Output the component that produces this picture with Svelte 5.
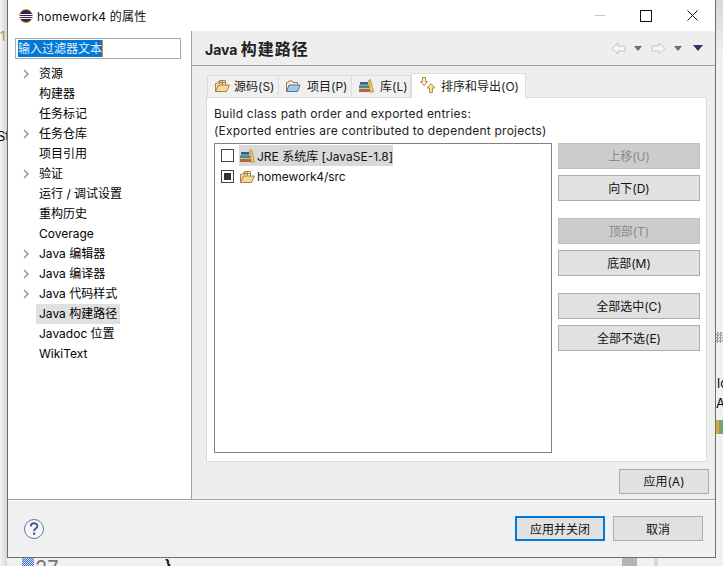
<script lang="ts">
    const tree = [
        { label: '资源', arrow: true },
        { label: '构建器' },
        { label: '任务标记' },
        { label: '任务仓库', arrow: true },
        { label: '项目引用' },
        { label: '验证', arrow: true },
        { label: '运行 / 调试设置' },
        { label: '重构历史' },
        { label: 'Coverage' },
        { label: 'Java 编辑器', arrow: true },
        { label: 'Java 编译器', arrow: true },
        { label: 'Java 代码样式', arrow: true },
        { label: 'Java 构建路径', selected: true },
        { label: 'Javadoc 位置' },
        { label: 'WikiText' }
    ];

    const groups = [
        [
            { label: '上移(U)', disabled: true },
            { label: '向下(D)' }
        ],
        [
            { label: '顶部(T)', disabled: true },
            { label: '底部(M)' }
        ],
        [{ label: '全部选中(C)' }, { label: '全部不选(E)' }]
    ];
</script>

{#snippet folderIcon()}
    <svg class="icon" width="16" height="16" viewBox="0 0 16 16">
        <path d="M1.5 13.5V5.5h1.5l1-1.5h3l.5 1.5" fill="#f3dfa8" stroke="#a8814a" />
        <path d="M5.5 6V2.5h6V7M8.5 2.5V7M5.5 4.5h6" fill="none" stroke="#a8814a" />
        <path d="M1.5 13.5l3-6.5h11l-3 6.5z" fill="#f5d99a" stroke="#a8814a" stroke-linejoin="round" />
    </svg>
{/snippet}

{#snippet projectIcon()}
    <svg class="icon" width="16" height="16" viewBox="0 0 16 16">
        <path d="M1.5 13.5V4.5h1.5l1-1.5h3l1 1.5h4.500v2" fill="#fbf1cf" stroke="#8f7a4e" />
        <path d="M1.5 13.500l2.500-6.500h11l-2.500 6.500z" fill="#a6c8ec" stroke="#4f7299" stroke-linejoin="round" />
    </svg>
{/snippet}

{#snippet libIcon()}
    <svg class="icon" width="16" height="16" viewBox="0 0 16 16">
        <path d="M10.500 2.500l2-1 3 12.500h-3.500z" fill="#eec765" stroke="#b88a30" stroke-width=".8" />
        <rect x="1" y="10.500" width="11" height="3.500" fill="#b5673c" />
        <rect x="1" y="7" width="10" height="3.500" fill="#3f8f7d" />
        <rect x="2" y="4" width="8" height="3" fill="#3a5f8c" />
        <path d="M1 10.500h11M1 7h10" stroke="#e8e8d8" stroke-width=".6" />
    </svg>
{/snippet}

{#snippet sortIcon()}
    <svg class="icon" width="18" height="18" viewBox="0 0 18 18">
        <path d="M3.500 1.500h3v4h2l-3.500 4-3.500-4h2z" fill="#fbf3dc" stroke="#a8853d" />
        <path d="M10.500 16.500v-4.500h-2.500l4-4.500 4 4.500h-2.500v4.500z" fill="#f7df9e" stroke="#bb9238" />
    </svg>
{/snippet}

<div class="desktop">
    <span class="shade-left"></span>
    <span class="behind behind-one">1</span>
    <span class="behind behind-st">St</span>
    <span class="behind-strip"></span>
    <span class="behind-tick"></span>
    <span class="behind behind-lo">lo</span>
    <span class="behind behind-a">A</span>
    <span class="behind-edge"></span>
    <span class="behind-hatch"></span>
    <span class="behind behind-num">27</span>
    <span class="behind behind-brace">}</span>
    <span class="behind-block"></span>
    <span class="behind-lilac"></span>

    <div class="window">
        <header class="titlebar">
            <svg class="app-icon" width="16" height="16" viewBox="0 0 16 16">
                <circle cx="8" cy="8" r="6.500" fill="#2c2255" stroke="#f7941e" stroke-width="1" />
                <path d="M1.500 6.500h13M1 8.500h14M1.500 10.500h13" stroke="#f4f2f8" stroke-width="1" />
            </svg>
            <span class="title">homework4 的属性</span>
            <div class="win-buttons">
                <span class="win-btn"><span class="min-mark"></span></span>
                <span class="win-btn"><span class="max-mark"></span></span>
                <span class="win-btn">
                    <svg width="11" height="11" viewBox="0 0 11 11">
                        <path d="M.5.500l10 10M10.500.500l-10 10" stroke="#111" stroke-width="1" fill="none" />
                    </svg>
                </span>
            </div>
        </header>

        <div class="main">
            <aside class="side">
                <div class="filter"><span class="filter-sel">输入过滤器文本</span></div>
                <ul class="tree">
                    {#each tree as item}
                        <li class="tree-row">
                            <span class="twisty">
                                {#if item.arrow}
                                    <svg width="7" height="10" viewBox="0 0 7 10">
                                        <path d="M1 1l4 4-4 4" fill="none" stroke="#9a9a9a" stroke-width="1.700" />
                                    </svg>
                                {/if}
                            </span>
                            <span class="tree-label" class:tree-selected={item.selected}>{item.label}</span>
                        </li>
                    {/each}
                </ul>
            </aside>

            <section class="content">
                <div class="page-head">
                    <h1>Java <span class="h1-cjk">构建路径</span></h1>
                    <div class="nav-tools">
                        <svg width="15" height="13" viewBox="0 0 15 13">
                            <path d="M14 4v5H7v3L1 6.500 7 1v3z" fill="#f6f6f6" stroke="#c4c4c4" />
                        </svg>
                        <span class="caret"></span>
                        <svg class="nav-next" width="15" height="13" viewBox="0 0 15 13">
                            <path d="M1 4v5h7v3l6-5.500L8 1v3z" fill="#f6f6f6" stroke="#c4c4c4" />
                        </svg>
                        <span class="caret"></span>
                        <span class="caret caret-menu"></span>
                    </div>
                </div>

                <div class="page-body">
                    <div class="tabs">
                        <div class="tab tab-src">{@render folderIcon()}<span>源码(S)</span></div>
                        <div class="tab tab-prj">{@render projectIcon()}<span>项目(P)</span></div>
                        <div class="tab tab-lib">{@render libIcon()}<span>库(L)</span></div>
                        <div class="tab tab-active">{@render sortIcon()}<span>排序和导出(O)</span></div>
                    </div>

                    <div class="tab-panel">
                        <p class="hint">Build class path order and exported entries:<br />(Exported entries are contributed to dependent projects)</p>
                        <div class="order">
                            <div class="list">
                                <div class="list-row">
                                    <span class="check"></span>
                                    <span class="entry entry-selected">{@render libIcon()}<span>JRE 系统库 [JavaSE-1.8]</span></span>
                                </div>
                                <div class="list-row">
                                    <span class="check check-mixed"></span>
                                    <span class="entry">{@render folderIcon()}<span>homework4/src</span></span>
                                </div>
                            </div>
                            <div class="actions">
                                {#each groups as group}
                                    <div class="action-group">
                                        {#each group as action}
                                            <button class="btn action" class:btn-disabled={action.disabled}>{action.label}</button>
                                        {/each}
                                    </div>
                                {/each}
                            </div>
                        </div>
                    </div>

                    <div class="apply-row">
                        <button class="btn apply">应用(A)</button>
                    </div>
                </div>
            </section>
        </div>

        <footer class="footer">
            <svg class="help" width="22" height="22" viewBox="0 0 22 22">
                <circle cx="11" cy="11" r="9.500" fill="#f4f6fa" stroke="#65789a" stroke-width="1" />
                <path d="M7.800 8.500c0-4.200 6.600-4.200 6.600-.3 0 2.300-3.300 2.400-3.300 4.800" fill="none" stroke="#4a5f85" stroke-width="2" />
                <rect x="10" y="14.500" width="2.200" height="2.200" fill="#4a5f85" />
            </svg>
            <div class="footer-buttons">
                <button class="btn footer-btn btn-primary">应用并关闭</button>
                <button class="btn footer-btn">取消</button>
            </div>
        </footer>
    </div>
</div>

<style>
    :global(body) {
        margin: 0;
    }

    .desktop {
        position: relative;
        width: 723px;
        height: 566px;
        padding-left: 7px;
        box-sizing: border-box;
        overflow: hidden;
        background: #f1f1f1;
        font-family: Inter, 'Noto Sans CJK SC', sans-serif;
        font-size: 12px;
        color: #000;
    }

    .shade-left {
        position: absolute;
        left: 0;
        top: 0;
        width: 7px;
        height: 566px;
        background: linear-gradient(90deg, #f4f4f4, #d6d6d6);
    }

    .behind {
        position: absolute;
        font-size: 13px;
        line-height: 16px;
    }

    .behind-one {
        left: 0;
        top: 28px;
        color: #b0895a;
    }

    .behind-st {
        left: -3px;
        top: 128px;
    }

    .behind-lo {
        left: 717px;
        top: 375px;
    }

    .behind-a {
        left: 716px;
        top: 395px;
    }

    .behind-num {
        left: 35px;
        top: 556px;
        font-size: 20px;
        line-height: 24px;
        color: #777;
    }

    .behind-brace {
        left: 165px;
        top: 556px;
        font-weight: 700;
    }

    .behind-hatch {
        position: absolute;
        left: 22px;
        top: 558px;
        width: 12px;
        height: 8px;
        background: repeating-conic-gradient(#3c78c8 0 25%, #cfe0f4 0 50%) 0 0 / 2px 2px;
    }

    .behind-block {
        position: absolute;
        left: 622px;
        top: 558px;
        width: 15px;
        height: 8px;
        background: #b5b5b5;
    }

    .behind-lilac {
        position: absolute;
        left: 654px;
        top: 558px;
        width: 4px;
        height: 8px;
        background: #d5d8ea;
    }

    .behind-strip {
        position: absolute;
        left: 716px;
        top: 0;
        width: 7px;
        height: 566px;
        background: linear-gradient(#d8d8d8, #f1f1f1 60px);
    }

    .behind-tick {
        position: absolute;
        left: 716px;
        top: 332px;
        width: 7px;
        height: 11px;
        background: repeating-conic-gradient(#9a9a9a 0 25%, #ececec 0 50%) 0 0 / 3px 3px;
    }

    .behind-edge {
        position: absolute;
        left: 716px;
        top: 420px;
        width: 7px;
        height: 14px;
        background: linear-gradient(90deg, #d9a441 3px, #6fa868 3px);
    }

    .window {
        position: relative;
        display: flex;
        flex-direction: column;
        width: 709px;
        height: 558px;
        box-sizing: border-box;
        border: 1px solid #6e6e6e;
        border-top: 0;
        background: #f0f0f0;
    }

    .titlebar {
        display: flex;
        align-items: center;
        height: 31px;
        flex: none;
        background: #fff;
        padding-left: 10px;
    }

    .app-icon {
        flex: none;
    }

    .title {
        margin-left: 3px;
        font-size: 12px;
        letter-spacing: .25px;
        color: #111;
    }

    .win-buttons {
        display: flex;
        margin-left: auto;
    }

    .win-btn {
        display: flex;
        align-items: center;
        justify-content: center;
        width: 46px;
        height: 30px;
    }

    .min-mark {
        width: 10px;
        height: 1px;
        background: #c4c4c4;
    }

    .max-mark {
        width: 10px;
        height: 10px;
        border: 1px solid #111;
    }

    .main {
        display: flex;
        flex: none;
        height: 468px;
        border-bottom: 1px solid #a0a0a0;
        box-shadow: 0 1px 0 #fff;
    }

    .side {
        flex: none;
        width: 184px;
        box-sizing: border-box;
        padding: 7px 10px 0 7px;
        background: #fff;
        border-right: 1px solid #a0a0a0;
    }

    .filter {
        display: flex;
        align-items: center;
        height: 21px;
        box-sizing: border-box;
        border: 1px solid #a9a9a9;
        padding-left: 2px;
    }

    .filter-sel {
        background: #0078d7;
        color: #e8f2fb;
        line-height: 17px;
        border-right: 1px solid #f08a24;
    }

    .tree {
        list-style: none;
        margin: 5px 0 0;
        padding: 0;
    }

    .tree-row {
        display: flex;
        align-items: center;
        height: 20px;
    }

    .twisty {
        display: flex;
        align-items: center;
        width: 24px;
        padding-left: 8px;
        box-sizing: border-box;
        flex: none;
        height: 12px;
    }

    .tree-label {
        padding: 0 3px;
        margin-left: -3px;
        line-height: 20px;
        white-space: nowrap;
    }

    .tree-selected {
        background: #e0e0e0;
    }

    .content {
        display: flex;
        flex-direction: column;
        flex: 1;
        min-width: 0;
        background: #eee;
    }

    .page-head {
        display: flex;
        align-items: center;
        justify-content: space-between;
        flex: none;
        height: 35px;
        box-sizing: border-box;
        padding: 0 12px 0 13px;
        border-bottom: 1px solid #a0a0a0;
    }

    h1 {
        margin: 0;
        font-size: 14px;
        font-weight: 700;
        color: #222;
    }

    .h1-cjk {
        font-size: 16px;
        letter-spacing: 1px;
    }

    .nav-tools {
        display: flex;
        align-items: center;
    }

    .nav-next {
        margin-left: 9px;
    }

    .caret {
        width: 0;
        height: 0;
        margin-left: 8px;
        border-left: 4px solid transparent;
        border-right: 4px solid transparent;
        border-top: 5px solid #6e6e6e;
    }

    .caret-menu {
        margin-left: 11px;
        border-left-width: 5px;
        border-right-width: 5px;
        border-top: 6px solid #3e2a6e;
    }

    .page-body {
        flex: 1;
        display: flex;
        flex-direction: column;
        padding: 6px 8px 0 14px;
    }

    .tabs {
        display: flex;
        align-items: flex-end;
        height: 25px;
        flex: none;
        margin-left: 1px;
        position: relative;
        z-index: 1;
    }

    .tab {
        display: flex;
        align-items: center;
        gap: 6px;
        height: 22px;
        box-sizing: border-box;
        padding: 0 0 2px 6px;
        background: #f0f0f0;
        border: 1px solid #dcdcdc;
        border-bottom: 0;
        border-left-width: 0;
        color: #222;
    }

    .tab-src {
        width: 72px;
        gap: 4px;
        border-left-width: 1px;
    }

    .tab-prj {
        width: 73px;
    }

    .tab-lib {
        width: 59px;
    }

    .tab-active {
        width: 115px;
        height: 25px;
        background: #fff;
        gap: 4px;
        padding-left: 7px;
        border-left-width: 1px;
        margin-bottom: -1px;
    }

    .tab-panel {
        flex: none;
        height: 365px;
        box-sizing: border-box;
        background: #fff;
        border: 1px solid #dcdcdc;
        padding: 7px 7px 0 7px;
    }

    .hint {
        margin: 0;
        line-height: 17px;
        letter-spacing: .22px;
        color: #222;
        white-space: nowrap;
    }

    .order {
        display: flex;
        gap: 6px;
        margin-top: 4px;
    }

    .list {
        flex: none;
        width: 338px;
        height: 310px;
        box-sizing: border-box;
        border: 1px solid #828282;
        padding: 1px 0 0 6px;
    }

    .list-row {
        display: flex;
        align-items: center;
        height: 21px;
    }

    .check {
        flex: none;
        width: 13px;
        height: 13px;
        box-sizing: border-box;
        border: 1px solid #444;
        background: #fff;
        margin-right: 5px;
    }

    .check-mixed {
        padding: 2px;
        background: #333 content-box;
    }

    .entry {
        display: flex;
        align-items: center;
        gap: 2px;
        height: 21px;
        padding-right: 3px;
        white-space: nowrap;
        color: #111;
    }

    .entry-selected {
        background: #d9d9d9;
        padding-right: 0;
    }

    .icon {
        flex: none;
    }

    .actions {
        display: flex;
        flex-direction: column;
        gap: 17px;
        width: 142px;
    }

    .action-group {
        display: flex;
        flex-direction: column;
        gap: 6px;
    }

    .btn {
        display: block;
        box-sizing: border-box;
        margin: 0;
        padding: 0 0 2px;
        font: inherit;
        color: #111;
        background: #e1e1e1;
        border: 1.500px solid #adadad;
    }

    .action {
        width: 142px;
        height: 26px;
    }

    .btn-disabled {
        background: #cccccc;
        border-color: #bfbfbf;
        color: #8a8a8a;
    }

    .apply-row {
        display: flex;
        justify-content: flex-end;
        margin-top: 7px;
        margin-right: -2px;
    }

    .apply {
        width: 90px;
        height: 25px;
    }

    .footer {
        display: flex;
        align-items: center;
        justify-content: space-between;
        flex: 1;
        padding: 0 12px 0 15px;
    }

    .help {
        flex: none;
    }

    .footer-buttons {
        display: flex;
        gap: 8px;
    }

    .footer-btn {
        width: 90px;
        height: 25px;
        padding: 0;
    }

    .btn-primary {
        border: 2px solid #0078d7;
    }
</style>
